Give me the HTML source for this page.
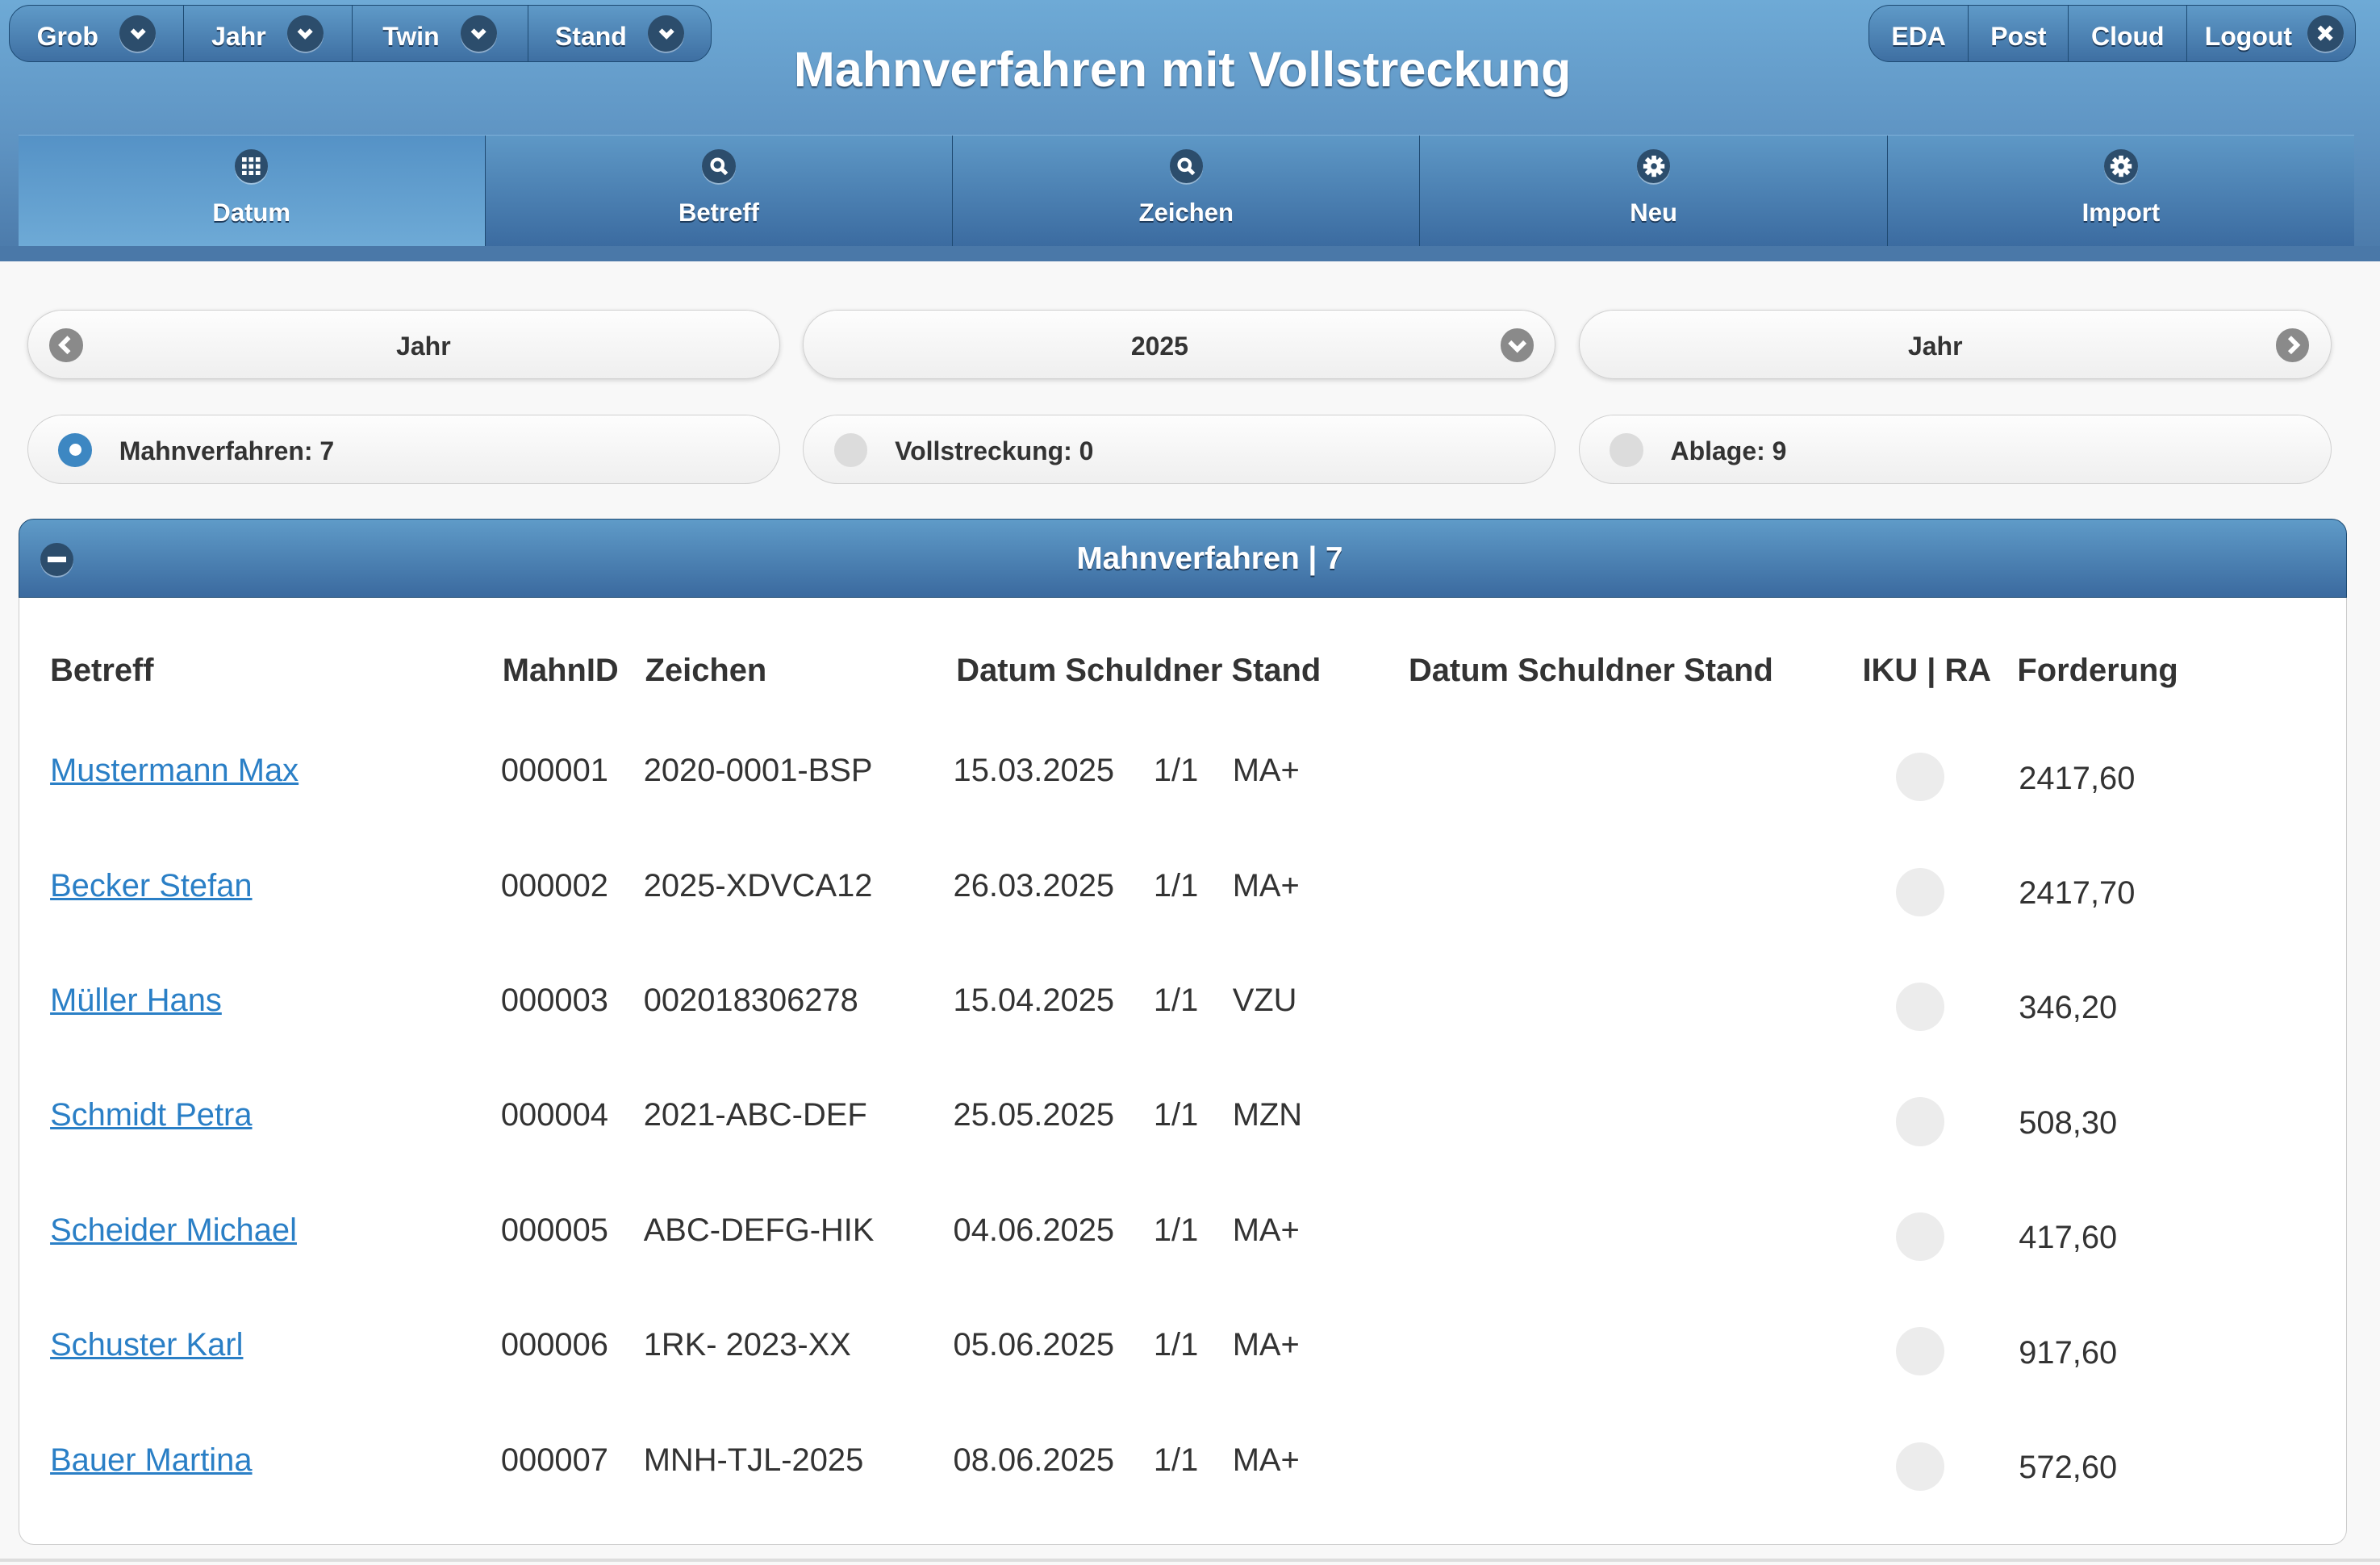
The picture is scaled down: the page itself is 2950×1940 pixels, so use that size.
<!DOCTYPE html>
<html><head><meta charset="utf-8"><style>
html,body{margin:0;padding:0;}
body{width:2950px;height:1940px;overflow:hidden;background:#f8f8f8;font-family:"Liberation Sans",Arial,sans-serif;}
#w{position:absolute;left:0;top:0;width:1568px;height:1031px;zoom:1.8814;}
.a{position:absolute;}
#hdr{left:0;top:0;width:1568px;height:172px;background:linear-gradient(#6eaad6,#5e93c2 55%,#4a78a8);}
.grp{height:37px;top:3px;border:1px solid #1d4a72;border-radius:14px;background:linear-gradient(#5f9ac8,#3e6fa2);overflow:hidden;display:flex;}
.grp div{border-left:1px solid #1d4a72;height:37px;padding-top:4px;display:flex;align-items:center;justify-content:center;color:#fff;font-weight:bold;font-size:17px;text-shadow:0 1px 0 #1d3a5a;box-sizing:border-box;gap:14px;}
.grp div .ci{margin-top:-4px;}
.grp div:first-child{border-left:none;}
.ci{width:24px;height:24px;border-radius:50%;background:#2c4d6c;box-shadow:0 1px 0 rgba(255,255,255,.4);display:inline-flex;align-items:center;justify-content:center;}
.title{left:0;width:1558px;top:27px;text-align:center;color:#fff;font-weight:bold;font-size:32.5px;text-shadow:0 1px 1px #2a4a6a;}
#tabs{left:12px;top:89px;width:1539px;height:73px;display:flex;border-top:1px solid #7fb0d8;}
#tabs div{flex:1;border-left:1px solid #1f4a72;background:linear-gradient(#5e98c6,#3b6ba0);color:#fff;font-weight:bold;font-size:16.5px;text-align:center;text-shadow:0 1px 0 #1d3a5a;position:relative;}
#tabs div:first-child{border-left:none;background:linear-gradient(#5592c6,#6eaad6);}
#tabs .ci{position:absolute;left:50%;margin-left:-11px;top:9px;width:22px;height:22px;}
#tabs span.l{position:absolute;left:0;right:0;top:41px;}
.pill{height:46px;width:496px;border:1px solid #d0d0d0;border-radius:24px;background:linear-gradient(#fdfdfd,#efefef);box-shadow:0 1px 3px rgba(0,0,0,.15);font-weight:bold;font-size:17px;color:#333;box-sizing:border-box;}
.pill .c{position:absolute;left:0;right:0;top:14px;text-align:center;}
.gi{position:absolute;top:12px;width:22px;height:22px;border-radius:50%;background:#8a8a8a;}
.rad{position:absolute;left:20px;top:12px;width:22px;height:22px;border-radius:50%;background:#dcdcdc;}
.rl{position:absolute;left:60px;top:14px;}
#ph{left:12px;top:342px;width:1534px;height:52px;border:1px solid #1d4a72;border-radius:10px 10px 0 0;background:linear-gradient(#5f9bc8,#3b6a9f);box-sizing:border-box;color:#fff;font-weight:bold;font-size:20.5px;text-align:center;line-height:52px;text-shadow:0 1px 0 #1d3a5a;padding-left:36px;}
#pc{left:12px;top:394px;width:1534px;height:624px;border:1px solid #ccc;border-top:none;border-radius:0 0 10px 10px;background:#fff;box-sizing:border-box;}
.th{font-weight:bold;font-size:21.2px;color:#333;top:430px;}
.td{font-size:21.2px;color:#333;}
.lk{color:#2a7fc6;text-decoration:underline;}
.dot{width:32px;height:32px;border-radius:50%;background:#ececec;}
</style></head><body><div id="w">
<div id="hdr" class="a"></div>
<div class="a grp" style="left:6px;width:462px;">
<div style="width:114px">Grob<span class="ci"><svg width="14" height="14" viewBox="0 0 14 14"><path d="M3 5l4 4 4-4" stroke="#fff" stroke-width="3" fill="none"/></svg></span></div>
<div style="width:111px">Jahr<span class="ci"><svg width="14" height="14" viewBox="0 0 14 14"><path d="M3 5l4 4 4-4" stroke="#fff" stroke-width="3" fill="none"/></svg></span></div>
<div style="width:116px">Twin<span class="ci"><svg width="14" height="14" viewBox="0 0 14 14"><path d="M3 5l4 4 4-4" stroke="#fff" stroke-width="3" fill="none"/></svg></span></div>
<div style="width:121px">Stand<span class="ci"><svg width="14" height="14" viewBox="0 0 14 14"><path d="M3 5l4 4 4-4" stroke="#fff" stroke-width="3" fill="none"/></svg></span></div>
</div>
<div class="a title">Mahnverfahren mit Vollstreckung</div>
<div class="a grp" style="left:1231px;width:320px;">
<div style="width:65px">EDA</div><div style="width:66px">Post</div><div style="width:78px">Cloud</div>
<div style="width:111px;gap:10px;padding-left:4px">Logout<span class="ci"><svg width="14" height="14" viewBox="0 0 14 14"><path d="M3 3l8 8M11 3l-8 8" stroke="#fff" stroke-width="3"/></svg></span></div>
</div>
<div id="tabs" class="a">
<div><span class="ci"><svg width="12" height="12" viewBox="0 0 12 12" fill="#fff"><rect x="0" y="0" width="3" height="3"/><rect x="4.5" y="0" width="3" height="3"/><rect x="9" y="0" width="3" height="3"/><rect x="0" y="4.5" width="3" height="3"/><rect x="4.5" y="4.5" width="3" height="3"/><rect x="9" y="4.5" width="3" height="3"/><rect x="0" y="9" width="3" height="3"/><rect x="4.5" y="9" width="3" height="3"/><rect x="9" y="9" width="3" height="3"/></svg></span><span class="l">Datum</span></div>
<div><span class="ci"><svg width="14" height="14" viewBox="0 0 14 14"><circle cx="6" cy="6" r="3.6" stroke="#fff" stroke-width="2.2" fill="none"/><path d="M8.5 8.5l3.5 3.5" stroke="#fff" stroke-width="2.6"/></svg></span><span class="l">Betreff</span></div>
<div><span class="ci"><svg width="14" height="14" viewBox="0 0 14 14"><circle cx="6" cy="6" r="3.6" stroke="#fff" stroke-width="2.2" fill="none"/><path d="M8.5 8.5l3.5 3.5" stroke="#fff" stroke-width="2.6"/></svg></span><span class="l">Zeichen</span></div>
<div><span class="ci"><svg width="16" height="16" viewBox="0 0 16 16"><g fill="#fff"><circle cx="8" cy="8" r="4.8"/><rect x="6.5" y="1" width="3" height="14"/><rect x="1" y="6.5" width="14" height="3"/><rect x="6.5" y="1" width="3" height="14" transform="rotate(45 8 8)"/><rect x="6.5" y="1" width="3" height="14" transform="rotate(-45 8 8)"/></g><circle cx="8" cy="8" r="2" fill="#2c4d6c"/></svg></span><span class="l">Neu</span></div>
<div><span class="ci"><svg width="16" height="16" viewBox="0 0 16 16"><g fill="#fff"><circle cx="8" cy="8" r="4.8"/><rect x="6.5" y="1" width="3" height="14"/><rect x="1" y="6.5" width="14" height="3"/><rect x="6.5" y="1" width="3" height="14" transform="rotate(45 8 8)"/><rect x="6.5" y="1" width="3" height="14" transform="rotate(-45 8 8)"/></g><circle cx="8" cy="8" r="2" fill="#2c4d6c"/></svg></span><span class="l">Import</span></div>
</div>
<div class="a" style="left:0;top:162px;width:1568px;height:10px;background:#4a78a8"></div>

<div class="a pill" style="left:18px;top:204px"><span class="gi" style="left:14px"><svg width="22" height="22" viewBox="0 0 22 22"><path d="M13 6l-5 5 5 5" stroke="#fff" stroke-width="3" fill="none"/></svg></span><div class="c" style="left:26px">Jahr</div></div>
<div class="a pill" style="left:529px;top:204px"><div class="c" style="right:26px">2025</div><span class="gi" style="right:14px"><svg width="22" height="22" viewBox="0 0 22 22"><path d="M6 9l5 5 5-5" stroke="#fff" stroke-width="3" fill="none"/></svg></span></div>
<div class="a pill" style="left:1040px;top:204px"><div class="c" style="right:26px">Jahr</div><span class="gi" style="right:14px"><svg width="22" height="22" viewBox="0 0 22 22"><path d="M9 6l5 5-5 5" stroke="#fff" stroke-width="3" fill="none"/></svg></span></div>

<div class="a pill" style="left:18px;top:273px;box-shadow:none"><span class="rad" style="background:#3d87c2"><span style="position:absolute;left:7px;top:7px;width:8px;height:8px;border-radius:50%;background:#fff"></span></span><span class="rl">Mahnverfahren: 7</span></div>
<div class="a pill" style="left:529px;top:273px;box-shadow:none"><span class="rad"></span><span class="rl">Vollstreckung: 0</span></div>
<div class="a pill" style="left:1040px;top:273px;box-shadow:none"><span class="rad"></span><span class="rl">Ablage: 9</span></div>

<div id="ph" class="a">Mahnverfahren | 7<span class="ci" style="position:absolute;left:14px;top:15px;width:22px;height:22px"><span style="width:12px;height:4px;background:#fff;display:block"></span></span></div>
<div id="pc" class="a"></div>
<div class="a" style="left:0;top:1027px;width:1568px;height:2px;background:#ddd"></div>

<div class="a th" style="left:33px">Betreff</div>
<div class="a th" style="left:331px">MahnID</div>
<div class="a th" style="left:425px">Zeichen</div>
<div class="a th" style="left:630px">Datum Schuldner Stand</div>
<div class="a th" style="left:928px">Datum Schuldner Stand</div>
<div class="a th" style="left:1227px">IKU | RA</div>
<div class="a th" style="left:1329px">Forderung</div>

<div id="rows"></div>
<script>
var d=[["Mustermann Max","000001","2020-0001-BSP","15.03.2025","MA+","2417,60"],
["Becker Stefan","000002","2025-XDVCA12","26.03.2025","MA+","2417,70"],
["Müller Hans","000003","002018306278","15.04.2025","VZU","346,20"],
["Schmidt Petra","000004","2021-ABC-DEF","25.05.2025","MZN","508,30"],
["Scheider Michael","000005","ABC-DEFG-HIK","04.06.2025","MA+","417,60"],
["Schuster Karl","000006","1RK- 2023-XX","05.06.2025","MA+","917,60"],
["Bauer Martina","000007","MNH-TJL-2025","08.06.2025","MA+","572,60"]];
var h="";
d.forEach(function(r,i){var y=496+i*75.7;
h+='<div class="a td lk" style="left:33px;top:'+y+'px">'+r[0]+'</div>'+
'<div class="a td" style="left:330px;top:'+y+'px">'+r[1]+'</div>'+
'<div class="a td" style="left:424px;top:'+y+'px">'+r[2]+'</div>'+
'<div class="a td" style="left:628px;top:'+y+'px">'+r[3]+'</div>'+
'<div class="a td" style="left:760px;top:'+y+'px">1/1</div>'+
'<div class="a td" style="left:812px;top:'+y+'px">'+r[4]+'</div>'+
'<div class="a dot" style="left:1249px;top:'+(y)+'px"></div>'+
'<div class="a td" style="left:1330px;top:'+(y+5)+'px">'+r[5]+'</div>';});
document.getElementById("rows").outerHTML=h;
</script>
</div></body></html>
